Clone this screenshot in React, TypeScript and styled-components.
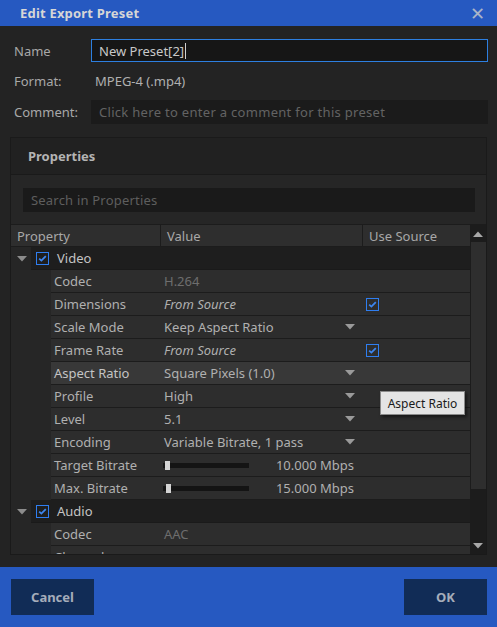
import React from "react";
import styled, { createGlobalStyle } from "styled-components";

const GlobalStyle = createGlobalStyle`
  html, body { margin: 0; padding: 0; background: #232323; }
  body { font-family: "Noto Sans", "Open Sans", sans-serif; font-size: 13px; color: #b8b8b8; }
  * { box-sizing: border-box; }
`;

const Dialog = styled.div`
  position: relative;
  width: 497px;
  height: 627px;
  display: flex;
  flex-direction: column;
  background: #232323;
  overflow: hidden;
`;

const TitleBar = styled.div`
  height: 26px;
  flex: none;
  background: #2659c1;
  display: flex;
  align-items: center;
  justify-content: space-between;
  padding: 0 12px 0 20px;
`;

const Title = styled.div`
  font-weight: 700;
  font-size: 13px;
  letter-spacing: 0.2px;
  color: #d6d6d6;
`;

const Close = styled.div`
  color: #a9b4c8;
  font-size: 18px;
  line-height: 1;
  display: flex;
`;

const Body = styled.div`
  flex: 1;
  display: flex;
  flex-direction: column;
  padding: 13px 9px 12px 10px;
  min-height: 0;
`;

const Form = styled.div`
  display: grid;
  grid-template-columns: 77px 1fr;
  grid-template-rows: 23px 38px 24px;
  align-items: center;
  margin-left: 4px;
`;

const Label = styled.div`
  color: #a8a8a8;
`;

const NameInput = styled.div`
  height: 23px;
  border: 1px solid #2d7fe0;
  background: #161616;
  color: #c8c8c8;
  display: flex;
  align-items: center;
  padding-left: 7px;
`;

const Caret = styled.span`
  display: inline-block;
  width: 1px;
  height: 16px;
  background: #d0d0d0;
  margin-left: 1px;
`;

const FormatValue = styled.div`
  color: #b0b0b0;
  padding-left: 4px;
`;

const CommentInput = styled.div`
  height: 24px;
  background: #1b1b1b;
  color: #636363;
  display: flex;
  align-items: center;
  padding-left: 8px;
  letter-spacing: 0.3px;
`;

const Panel = styled.div`
  margin-top: 13px;
  margin-right: 1px;
  flex: 1;
  min-height: 0;
  border: 1px solid #1a1a1a;
  display: flex;
  flex-direction: column;
  background: #262626;
`;

const PanelHeader = styled.div`
  height: 37px;
  flex: none;
  background: #212121;
  border-bottom: 1px solid #1a1a1a;
  display: flex;
  align-items: center;
  padding-left: 17px;
  font-weight: 700;
  color: #b4b4b4;
`;

const SearchSection = styled.div`
  flex: none;
  padding: 13px 11px 12px 12px;
  background: #262626;
`;

const SearchInput = styled.div`
  height: 24px;
  background: #1a1a1a;
  color: #5e5e5e;
  display: flex;
  align-items: center;
  padding-left: 8px;
  letter-spacing: 0.2px;
`;

const TableArea = styled.div`
  flex: 1;
  min-height: 0;
  display: flex;
  border-top: 1px solid #1c1c1c;
`;

const Table = styled.div`
  flex: 1;
  min-width: 0;
  display: flex;
  flex-direction: column;
  overflow: hidden;
`;

const HeaderRow = styled.div`
  height: 22px;
  flex: none;
  display: grid;
  grid-template-columns: 149px 201px 1fr;
  background: #1c1c1c;
  gap: 1px;
  border-bottom: 1px solid #1c1c1c;
`;

const HeaderCell = styled.div`
  background: #2e2e2e;
  display: flex;
  align-items: center;
  padding-left: 6px;
  color: #a8a8a8;
`;

const GroupRow = styled.div`
  height: 23px;
  flex: none;
  display: flex;
  align-items: stretch;
`;

const Expander = styled.div`
  width: 20px;
  display: flex;
  align-items: center;
  justify-content: center;
  padding-left: 1px;
`;

const GroupBody = styled.div`
  flex: 1;
  background: #1e1e1e;
  border-bottom: 1px solid #1a1a1a;
  display: flex;
  align-items: center;
  padding-left: 5px;
  gap: 8px;
  color: #c4c4c4;
`;

const Row = styled.div<{ $hl?: boolean }>`
  height: 23px;
  flex: none;
  margin-left: 40px;
  display: grid;
  grid-template-columns: 110px 200px 1fr;
  align-items: center;
  background: ${(p) => (p.$hl ? "#383838" : "#2d2d2d")};
  border-bottom: 1px solid #1c1c1c;
  color: #b0b0b0;
`;

const NameCell = styled.div<{ $hl?: boolean }>`
  padding-left: 3px;
  white-space: nowrap;
  color: ${(p) => (p.$hl ? "#c4c4c4" : "#b0b0b0")};
`;

const ValueCell = styled.div<{ $muted?: boolean; $italic?: boolean }>`
  padding: 0 6px 0 3px;
  display: flex;
  align-items: center;
  justify-content: space-between;
  white-space: nowrap;
  color: ${(p) => (p.$muted ? "#6e6e6e" : "#b0b0b0")};
  font-style: ${(p) => (p.$italic ? "italic" : "normal")};
`;

const SourceCell = styled.div`
  padding-left: 5px;
  display: flex;
  align-items: center;
`;

const SliderWrap = styled.div`
  display: flex;
  align-items: center;
  justify-content: space-between;
  width: 100%;
  margin-left: -1px;
`;

const Track = styled.div`
  position: relative;
  width: 86px;
  height: 5px;
  background: #141414;
`;

const Thumb = styled.div`
  position: absolute;
  top: -2px;
  width: 5px;
  height: 9px;
  background: #d4d4d4;
`;

const Scrollbar = styled.div`
  width: 16px;
  flex: none;
  background: #1c1c1c;
  display: flex;
  flex-direction: column;
`;

const ScrollButton = styled.div`
  height: 17px;
  flex: none;
  display: flex;
  align-items: center;
  justify-content: center;
`;

const ScrollThumb = styled.div`
  height: 247px;
  margin-left: 1px;
  background: #2e2e2e;
  flex: none;
`;

const ScrollSpacer = styled.div`
  flex: 1;
`;

const Footer = styled.div`
  height: 60px;
  flex: none;
  background: #2659c1;
  display: flex;
  align-items: center;
  justify-content: space-between;
  padding: 0 10px 0 11px;
`;

const Button = styled.div`
  width: 83px;
  height: 36px;
  background: #112c56;
  color: #a5adba;
  font-weight: 700;
  display: flex;
  align-items: center;
  justify-content: center;
`;

const Tooltip = styled.div`
  position: absolute;
  left: 380px;
  top: 391px;
  width: 85px;
  height: 24px;
  background: #e4e4e4;
  border: 1px solid #8a8a8a;
  box-shadow: 2px 2px 3px rgba(0, 0, 0, 0.5);
  color: #1a1a1a;
  font-size: 12px;
  display: flex;
  align-items: center;
  justify-content: center;
`;

const Check = () => (
  <svg width="13" height="13" viewBox="0 0 13 13">
    <rect x="0.5" y="0.5" width="12" height="12" fill="none" stroke="#2f7ef0" />
    <path d="M3.2 6.6 L5.4 8.6 L9.8 4.2" fill="none" stroke="#3d86f0" strokeWidth="1.8" />
  </svg>
);

const TriDown = ({ c = "#8c8c8c" }: { c?: string }) => (
  <svg width="10" height="6" viewBox="0 0 10 6">
    <path d="M0 0 H10 L5 5.5 Z" fill={c} />
  </svg>
);

const TriUp = () => (
  <svg width="10" height="6" viewBox="0 0 10 6">
    <path d="M0 6 H10 L5 0.5 Z" fill="#a8a8a8" />
  </svg>
);

type RowData = {
  name: string;
  value?: string;
  muted?: boolean;
  italic?: boolean;
  dropdown?: boolean;
  check?: boolean;
  slider?: { pos: number; text: string };
  hl?: boolean;
};

const videoRows: RowData[] = [
  { name: "Codec", value: "H.264", muted: true },
  { name: "Dimensions", value: "From Source", italic: true, check: true },
  { name: "Scale Mode", value: "Keep Aspect Ratio", dropdown: true },
  { name: "Frame Rate", value: "From Source", italic: true, check: true },
  { name: "Aspect Ratio", value: "Square Pixels (1.0)", dropdown: true, hl: true },
  { name: "Profile", value: "High", dropdown: true },
  { name: "Level", value: "5.1", dropdown: true },
  { name: "Encoding", value: "Variable Bitrate, 1 pass", dropdown: true },
  { name: "Target Bitrate", slider: { pos: 2, text: "10.000 Mbps" } },
  { name: "Max. Bitrate", slider: { pos: 3, text: "15.000 Mbps" } },
];

const audioRows: RowData[] = [
  { name: "Codec", value: "AAC", muted: true },
  { name: "Channels", value: "" },
];

const PropRow = ({ r }: { r: RowData }) => (
  <Row $hl={r.hl}>
    <NameCell $hl={r.hl}>{r.name}</NameCell>
    <ValueCell $muted={r.muted} $italic={r.italic}>
      {r.slider ? (
        <SliderWrap>
          <Track>
            <Thumb style={{ left: r.slider.pos }} />
          </Track>
          <span>{r.slider.text}</span>
        </SliderWrap>
      ) : (
        <>
          <span>{r.value}</span>
          {r.dropdown && <TriDown c="#9a9a9a" />}
        </>
      )}
    </ValueCell>
    <SourceCell>{r.check && <Check />}</SourceCell>
  </Row>
);

const Group = ({ name }: { name: string }) => (
  <GroupRow>
    <Expander>
      <TriDown />
    </Expander>
    <GroupBody>
      <Check />
      <span>{name}</span>
    </GroupBody>
  </GroupRow>
);

export default function App() {
  return (
    <>
      <GlobalStyle />
      <Dialog>
        <TitleBar>
          <Title>Edit Export Preset</Title>
          <Close>✕</Close>
        </TitleBar>
        <Body>
          <Form>
            <Label>Name</Label>
            <NameInput>
              New Preset[2]
              <Caret />
            </NameInput>
            <Label>Format:</Label>
            <FormatValue>MPEG-4 (.mp4)</FormatValue>
            <Label>Comment:</Label>
            <CommentInput>Click here to enter a comment for this preset</CommentInput>
          </Form>
          <Panel>
            <PanelHeader>Properties</PanelHeader>
            <SearchSection>
              <SearchInput>Search in Properties</SearchInput>
            </SearchSection>
            <TableArea>
              <Table>
                <HeaderRow>
                  <HeaderCell>Property</HeaderCell>
                  <HeaderCell>Value</HeaderCell>
                  <HeaderCell>Use Source</HeaderCell>
                </HeaderRow>
                <Group name="Video" />
                {videoRows.map((r, i) => (
                  <PropRow key={"v" + i} r={r} />
                ))}
                <Group name="Audio" />
                {audioRows.map((r, i) => (
                  <PropRow key={"a" + i} r={r} />
                ))}
              </Table>
              <Scrollbar>
                <ScrollButton>
                  <TriUp />
                </ScrollButton>
                <ScrollThumb />
                <ScrollSpacer />
                <ScrollButton>
                  <TriDown c="#a8a8a8" />
                </ScrollButton>
              </Scrollbar>
            </TableArea>
          </Panel>
        </Body>
        <Footer>
          <Button>Cancel</Button>
          <Button>OK</Button>
        </Footer>
        <Tooltip>Aspect Ratio</Tooltip>
      </Dialog>
    </>
  );
}
